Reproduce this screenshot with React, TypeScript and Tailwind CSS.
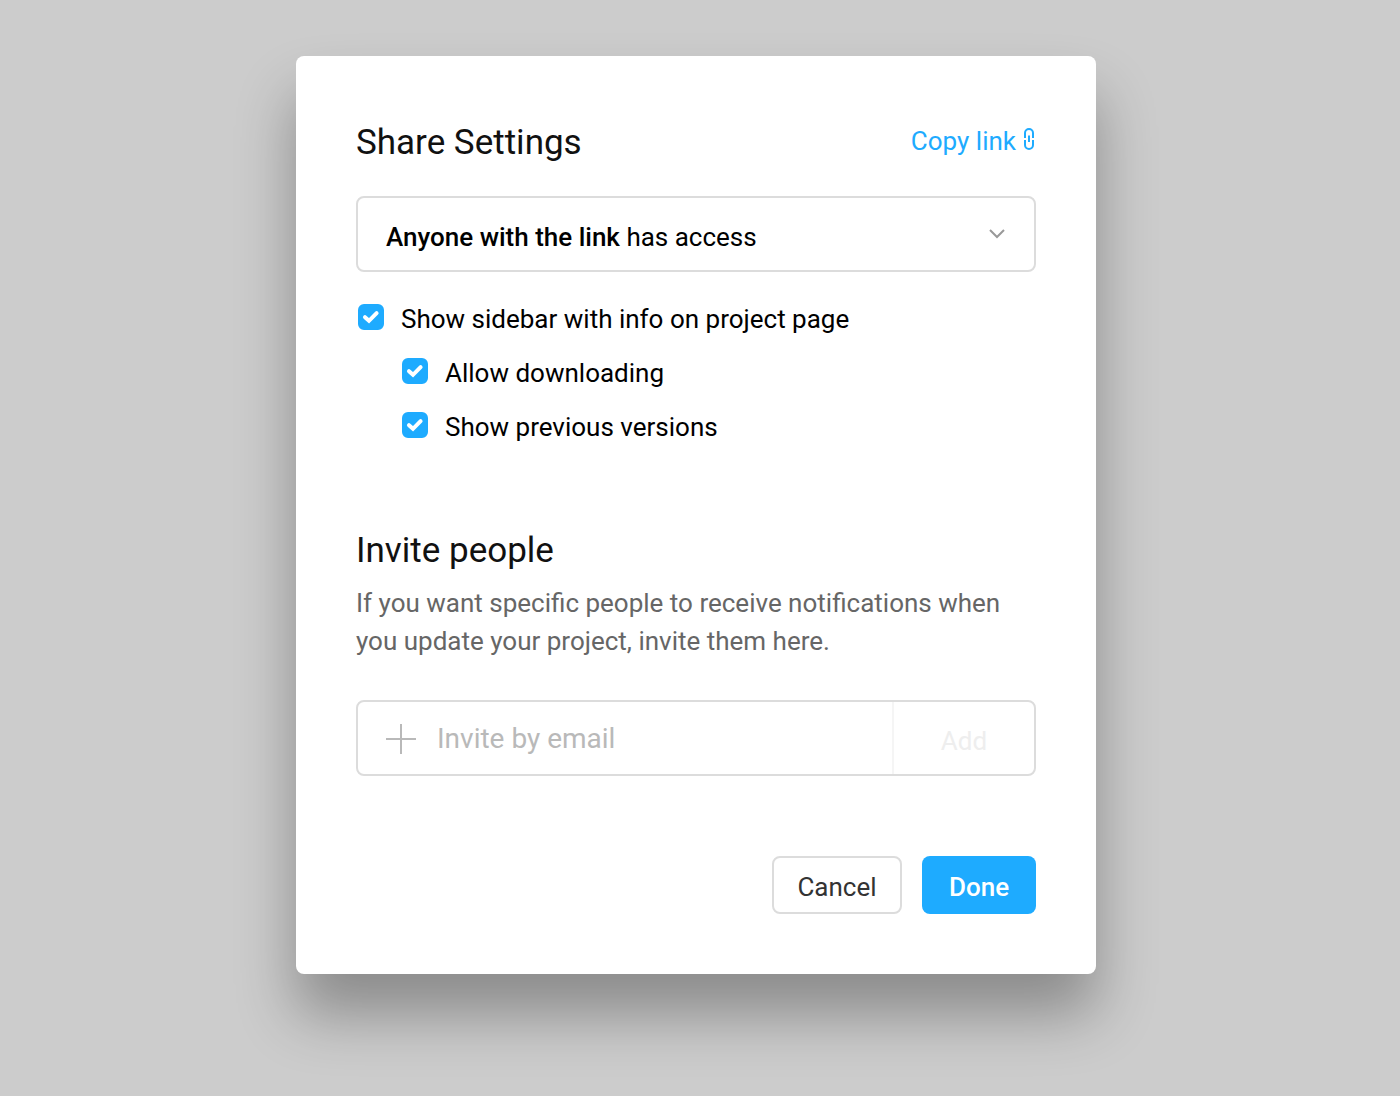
import { useState } from "react";

type OptionProps = {
  id: string;
  label: string;
  checked: boolean;
  onChange: (value: boolean) => void;
};

function Option({ id, label, checked, onChange }: OptionProps) {
  return (
    <div className="flex items-start gap-[17px]">
      <span className="relative mt-1 block size-[26px] shrink-0">
        <input
          id={id}
          type="checkbox"
          checked={checked}
          onChange={(e) => onChange(e.target.checked)}
          className="block size-full cursor-pointer appearance-none rounded-md border-2 border-[#dcdcdc] bg-white checked:border-[#1eabff] checked:bg-[#1eabff]"
        />
        {checked && (
          <svg viewBox="0 0 26 26" aria-hidden="true" className="pointer-events-none absolute inset-0 size-full">
            <path d="M7 13.2 L11 16.8 L18.6 9.2" fill="none" stroke="#fff" strokeWidth="4" strokeLinecap="round" strokeLinejoin="miter" />
          </svg>
        )}
      </span>
      <label htmlFor={id} className="cursor-pointer text-[26px] leading-[38px] text-black">
        {label}
      </label>
    </div>
  );
}

export default function App() {
  const [access, setAccess] = useState("link");
  const [sidebar, setSidebar] = useState(true);
  const [downloads, setDownloads] = useState(true);
  const [versions, setVersions] = useState(true);
  const [email, setEmail] = useState("");

  return (
    <main className="flex min-h-screen items-start justify-center bg-[#cccccc] py-14 pr-2 font-['Roboto',sans-serif]">
      <section
        aria-labelledby="share-title"
        className="w-full max-w-[800px] rounded-lg bg-white p-[60px] shadow-[0_40px_60px_rgba(0,0,0,0.32)]"
      >
        <header className="flex items-start justify-between">
          <h1 id="share-title" className="text-[35px] leading-[54px] text-[#111111]">
            Share Settings
          </h1>
          <a href="#copy" className="flex items-start gap-2 text-[26px] leading-[50px] text-[#1eabff]">
            Copy link
            <svg width="12" height="24" viewBox="0 0 12 24" fill="none" stroke="currentColor" strokeWidth="2" aria-hidden="true" className="mt-3">
              <path d="M1 10V5a4 4 0 0 1 8 0v5" />
              <path d="M1 12v5a4 4 0 0 0 8 0v-5" />
              <path d="M5 7.5v6.5" />
            </svg>
          </a>
        </header>

        <div className="relative mt-[26px] flex h-[76px] items-center justify-between rounded-lg border-2 border-[#dcdcdc] px-7">
          <p className="pt-1.5 text-[26px] text-black" aria-hidden="true">
            <span className="font-medium">{access === "link" ? "Anyone with the link" : "Only invited people"}</span>{" "}
            {access === "link" ? "has access" : "have access"}
          </p>
          <svg width="18" height="10" viewBox="0 0 18 10" fill="none" stroke="#999999" strokeWidth="2" aria-hidden="true">
            <path d="M2 1l7 7 7-7" />
          </svg>
          <select
            aria-label="Who has access"
            value={access}
            onChange={(e) => setAccess(e.target.value)}
            className="absolute inset-0 size-full cursor-pointer opacity-0"
          >
            <option value="link">Anyone with the link has access</option>
            <option value="invited">Only invited people have access</option>
          </select>
        </div>

        <div className="mt-7 flex flex-col gap-4 pl-0.5">
          <Option id="sidebar" label="Show sidebar with info on project page" checked={sidebar} onChange={setSidebar} />
          <div className="flex flex-col gap-4 pl-11">
            <Option id="downloads" label="Allow downloading" checked={downloads} onChange={setDownloads} />
            <Option id="versions" label="Show previous versions" checked={versions} onChange={setVersions} />
          </div>
        </div>

        <h2 className="mt-[78px] text-[35px] leading-[54px] text-[#111111]">Invite people</h2>
        <p className="mt-1.5 text-[26px] leading-[38px] text-[#666666]">
          If you want specific people to receive notifications when you update your project, invite them here.
        </p>

        <form
          onSubmit={(e) => e.preventDefault()}
          className="mt-10 flex h-[76px] items-stretch rounded-lg border-2 border-[#dcdcdc]"
        >
          <label htmlFor="email" aria-label="Invite by email" className="flex items-center pt-0.5 pl-7 pr-[21px]">
            <svg width="30" height="30" viewBox="0 0 30 30" stroke="#b9b9b9" strokeWidth="2" aria-hidden="true">
              <path d="M15 0v30M0 15h30" />
            </svg>
          </label>
          <input
            id="email"
            type="email"
            value={email}
            onChange={(e) => setEmail(e.target.value)}
            placeholder="Invite by email"
            className="min-w-0 flex-1 bg-transparent pt-0.5 text-[28px] text-[#111111] outline-none placeholder:text-[#b9b9b9]"
          />
          <button type="submit" className="w-[142px] border-l-2 border-[#f5f5f5] pt-1.5 text-[26px] text-[#eeeeee]">
            Add
          </button>
        </form>

        <footer className="mt-20 flex justify-end gap-5">
          <button type="button" className="h-[58px] w-[130px] rounded-lg border-2 border-[#dcdcdc] pt-1 text-[26px] text-[#333333]">
            Cancel
          </button>
          <button type="button" className="h-[58px] w-[114px] rounded-lg bg-[#1eabff] pt-1 text-[26px] font-medium text-white">
            Done
          </button>
        </footer>
      </section>
    </main>
  );
}
